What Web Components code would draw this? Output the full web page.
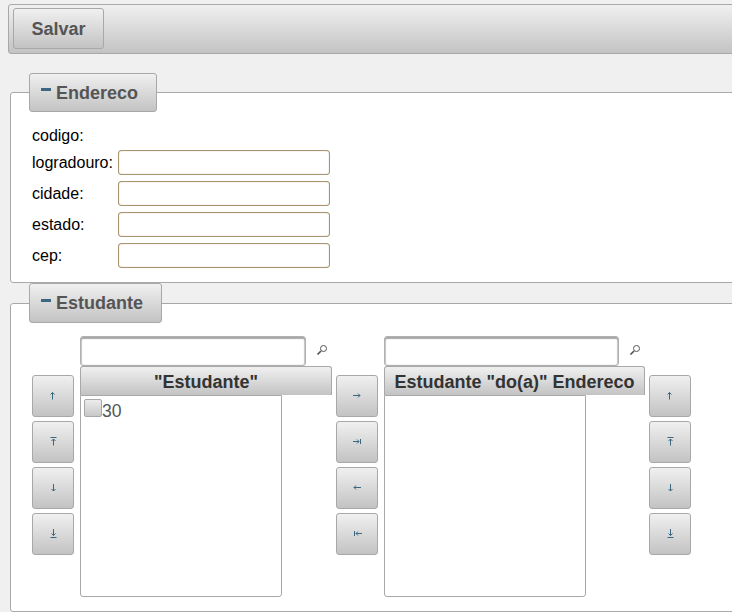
<!DOCTYPE html>
<html lang="pt">
<head>
<meta charset="utf-8">
<title>Endereco</title>
<style>
  html, body { margin: 0; height: 100%; overflow: hidden; }
  body {
    background: #f0f0f0;
    font-family: "Liberation Sans", Arial, sans-serif;
    font-size: 16px;
    color: #000;
    width: 780px;
    padding: 4px 0 0 8px;
    box-sizing: border-box;
  }
</style>
</head>
<body>
  <app-toolbar><ui-button label="Salvar"></ui-button></app-toolbar>

  <ui-panel legend="Endereco" style="margin-top:19px">
    <address-form>
      <form-row label="codigo:" static></form-row>
      <form-row label="logradouro:"></form-row>
      <form-row label="cidade:"></form-row>
      <form-row label="estado:"></form-row>
      <form-row label="cep:"></form-row>
    </address-form>
  </ui-panel>

  <ui-panel legend="Estudante" style="--legend-height:40px">
    <pick-list source-title="&quot;Estudante&quot;" target-title="Estudante &quot;do(a)&quot; Endereco"></pick-list>
  </ui-panel>

<script>
// Icones 16x16 (equivalentes aos sprites do tema)
const ICONS = {
  up: '<path d="M7.5 4.500v7M5.500 6.500l2-2 2 2"/>',
  top: '<path d="M5.500 3.500h6M8.500 5v6.500M6.500 7l2-2 2 2"/>',
  down: '<path d="M8.500 4v7M6.500 9l2 2 2-2"/>',
  bottom: '<path d="M8.500 3v6.500M6.500 7.500l2 2 2-2M5.500 11.500h6"/>',
  right: '<path d="M4 7.500h7M9 5.500l2 2-2 2"/>',
  last: '<path d="M4 7.500h6M8 5.500l2 2-2 2M11.500 5v5"/>',
  left: '<path d="M5 7.500h7M7 5.500l-2 2 2 2"/>',
  first: '<path d="M5.500 5v5M7 7.500h6M9 5.500l-2 2 2 2"/>'
};

const GRADIENT = 'linear-gradient(#f0f0f0, #c3c3c3)';

class AppToolbar extends HTMLElement {
  constructor() {
    super();
    this.attachShadow({ mode: 'open' });
    this.shadowRoot.innerHTML = `
      <style>
        :host {
          display: flex;
          box-sizing: border-box;
          height: 50px;
          padding: 3px 4px;
          border: 1px solid #a8a8a8;
          border-radius: 3px;
          background: ${GRADIENT};
        }
      </style>
      <slot></slot>
    `;
  }
}

class UiButton extends HTMLElement {
  constructor() {
    super();
    this.attachShadow({ mode: 'open' });
  }

  connectedCallback() {
    const label = this.getAttribute('label');
    this.shadowRoot.innerHTML = `
      <style>
        :host {
          display: flex;
          align-items: center;
          justify-content: center;
          box-sizing: border-box;
          width: 91px;
          height: 41px;
          padding-top: 1px;
          border: 1px solid #a8a8a8;
          border-radius: 3px;
          background: ${GRADIENT};
          color: #555;
          font-weight: bold;
          font-size: 18px;
        }
      </style>
      ${label}
    `;
  }
}

class IconButton extends HTMLElement {
  constructor() {
    super();
    this.attachShadow({ mode: 'open' });
  }

  connectedCallback() {
    const icon = ICONS[this.getAttribute('icon')];
    this.shadowRoot.innerHTML = `
      <style>
        :host {
          display: flex;
          align-items: center;
          justify-content: center;
          box-sizing: border-box;
          width: 42px;
          height: 42px;
          border: 1px solid #a8a8a8;
          border-radius: 3px;
          background: ${GRADIENT};
        }
        svg { fill: none; stroke: #3a6680; stroke-width: 1; }
      </style>
      <svg width="16" height="16" viewBox="0 0 16 16">${icon}</svg>
    `;
  }
}

class UiPanel extends HTMLElement {
  constructor() {
    super();
    this.attachShadow({ mode: 'open' });
  }

  connectedCallback() {
    const legend = this.getAttribute('legend');
    this.shadowRoot.innerHTML = `
      <style>
        :host { display: block; margin-left: 2px; }
        fieldset {
          margin: 0;
          padding: 0 0 0 18px;
          background: #fff;
          border: 1px solid #a8a8a8;
          border-radius: 3px;
          min-width: 0;
        }
        legend {
          display: flex;
          align-items: center;
          box-sizing: border-box;
          height: var(--legend-height, 39px);
          padding: 1px 18px 0 11px;
          border: 1px solid #a8a8a8;
          border-radius: 3px;
          background: ${GRADIENT};
          color: #555;
          font-weight: bold;
          font-size: 18px;
        }
        .minus {
          width: 10px;
          height: 3px;
          margin: -7px 5px 0 0;
          background: #3a6680;
        }
      </style>
      <fieldset>
        <legend><span class="minus"></span>${legend}</legend>
        <slot></slot>
      </fieldset>
    `;
  }
}

class AddressForm extends HTMLElement {
  constructor() {
    super();
    this.attachShadow({ mode: 'open' });
    this.shadowRoot.innerHTML = `
      <style>
        :host {
          display: flex;
          flex-direction: column;
          gap: 6px;
          padding: 15px 0 14px 3px;
        }
      </style>
      <slot></slot>
    `;
  }
}

class FormRow extends HTMLElement {
  constructor() {
    super();
    this.attachShadow({ mode: 'open' });
  }

  connectedCallback() {
    const label = this.getAttribute('label');
    const field = this.hasAttribute('static') ? '' : '<input type="text">';
    this.shadowRoot.innerHTML = `
      <style>
        :host { display: flex; align-items: center; min-height: 18px; }
        :host([static]) { margin-bottom: -1px; }
        label { width: 86px; }
        input {
          box-sizing: border-box;
          width: 212px;
          height: 25px;
          margin: 0;
          padding: 2px 4px;
          background: #fff;
          border: 1px solid #a8956f;
          border-radius: 3px;
          box-shadow: inset 0 0 1px #a8956f;
          outline: none;
        }
      </style>
      <label>${label}</label>${field}
    `;
  }
}

class PickColumn extends HTMLElement {
  constructor() {
    super();
    this.attachShadow({ mode: 'open' });
  }

  connectedCallback() {
    const inputWidth = this.getAttribute('input-width');
    const title = this.getAttribute('column-title');
    this.shadowRoot.innerHTML = `
      <style>
        :host { display: block; width: var(--head-width); }
        .search { display: flex; align-items: center; height: 30px; }
        input {
          box-sizing: border-box;
          width: ${inputWidth}px;
          height: 30px;
          margin: 0;
          background: #fff;
          border: 1px solid #b0b0b0;
          border-radius: 3px;
          box-shadow: inset 0 2px 1px #a8a8a8, inset 1px 0 1px #c8c8c8, inset -1px 0 1px #c8c8c8;
          outline: none;
        }
        svg { margin: -3px 0 0 10px; fill: none; stroke: #555; }
        .head {
          box-sizing: border-box;
          height: 29px;
          padding-top: 5px;
          border: 1px solid #a8a8a8;
          border-bottom: 0;
          border-radius: 3px 3px 0 0;
          background: ${GRADIENT};
          color: #333;
          font-weight: bold;
          font-size: 18px;
          line-height: 20px;
          text-align: center;
          white-space: nowrap;
        }
        .list {
          box-sizing: border-box;
          width: 202px;
          height: 202px;
          padding: 3px;
          background: #fff;
          border: 1px solid #a8a8a8;
          border-radius: 0 0 3px 3px;
        }
      </style>
      <div class="search">
        <input type="text">
        <svg width="12" height="12" viewBox="0 0 12 12">
          <circle cx="7.500" cy="4.500" r="3" stroke-width="1"/>
          <path d="M5 7L1.500 10.500" stroke-width="1.700"/>
        </svg>
      </div>
      <div class="head">${title}</div>
      <div class="list"><slot></slot></div>
    `;
  }
}

class PickItem extends HTMLElement {
  constructor() {
    super();
    this.attachShadow({ mode: 'open' });
    this.shadowRoot.innerHTML = `
      <style>
        :host {
          display: flex;
          align-items: baseline;
          color: #555;
          font-size: 17.6px;
        }
        .box {
          box-sizing: border-box;
          width: 18px;
          height: 18px;
          border: 1px solid #a8a8a8;
          border-radius: 2px;
          background: linear-gradient(#ececec, #c8c8c8);
        }
      </style>
      <span class="box"></span><slot></slot>
    `;
  }
}

class ButtonStack extends HTMLElement {
  constructor() {
    super();
    this.attachShadow({ mode: 'open' });
  }

  connectedCallback() {
    const icons = this.getAttribute('icons').split(' ');
    this.shadowRoot.innerHTML = `
      <style>
        :host {
          display: flex;
          flex-direction: column;
          gap: 4px;
          padding-top: 39px;
        }
      </style>
      ${icons.map(name => `<icon-button icon="${name}"></icon-button>`).join('')}
    `;
  }
}

class PickList extends HTMLElement {
  constructor() {
    super();
    this.attachShadow({ mode: 'open' });
  }

  connectedCallback() {
    const source = this.getAttribute('source-title');
    const target = this.getAttribute('target-title');
    this.shadowRoot.innerHTML = `
      <style>
        :host {
          display: flex;
          align-items: flex-start;
          padding: 13px 0 14px 3px;
        }
        .source { --head-width: 252px; margin: 0 4px 0 6px; }
        .target { --head-width: 261px; margin: 0 4px 0 6px; }
      </style>
      <button-stack icons="up top down bottom"></button-stack>
      <pick-column class="source" input-width="226" column-title='${source}'><pick-item>30</pick-item></pick-column>
      <button-stack icons="right last left first"></button-stack>
      <pick-column class="target" input-width="235" column-title='${target}'></pick-column>
      <button-stack icons="up top down bottom"></button-stack>
    `;
  }
}

customElements.define('app-toolbar', AppToolbar);
customElements.define('ui-button', UiButton);
customElements.define('icon-button', IconButton);
customElements.define('ui-panel', UiPanel);
customElements.define('address-form', AddressForm);
customElements.define('form-row', FormRow);
customElements.define('pick-column', PickColumn);
customElements.define('pick-item', PickItem);
customElements.define('button-stack', ButtonStack);
customElements.define('pick-list', PickList);
</script>
</body>
</html>
